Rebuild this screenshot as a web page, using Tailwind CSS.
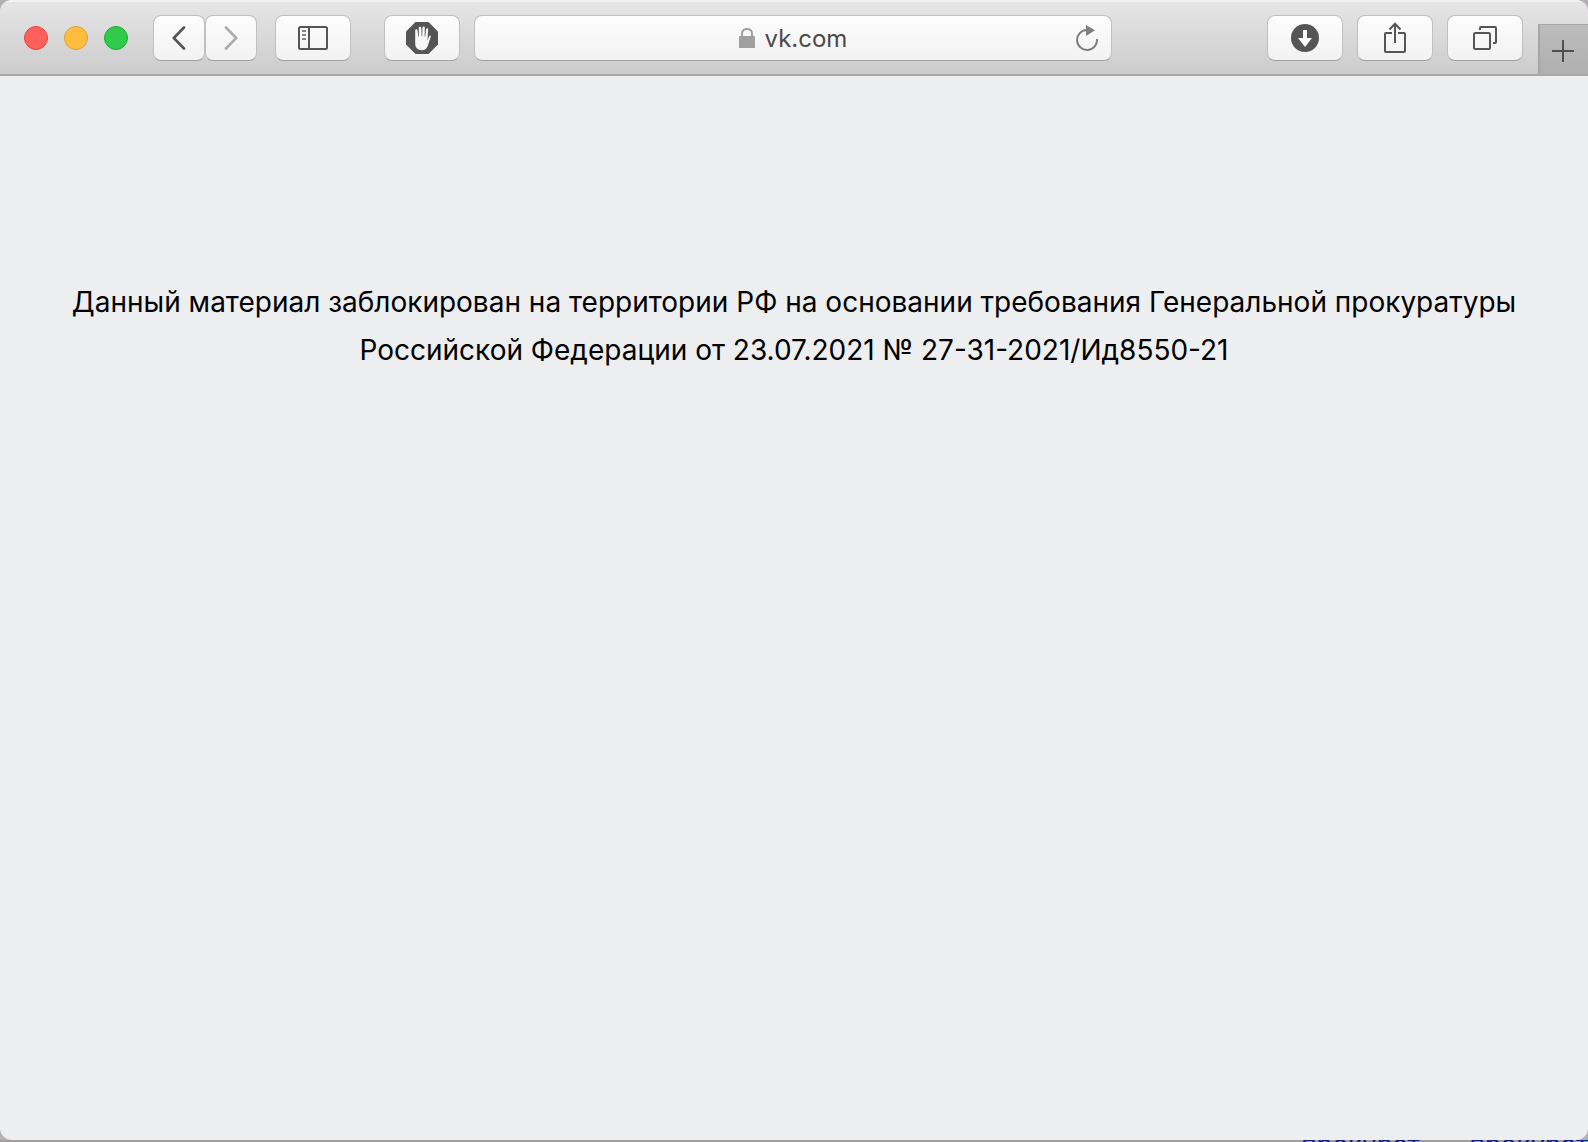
<!DOCTYPE html>
<html lang="ru">
<head>
  <meta charset="UTF-8">
  <meta name="viewport" content="width=device-width, initial-scale=1">
  <title>vk.com</title>
  <script src="https://cdn.jsdelivr.net/npm/@tailwindcss/browser@4"></script>
</head>
<body class="min-h-screen flex flex-col bg-[#b3b1b3] font-['Inter','Liberation_Sans',sans-serif] text-black">
  <!-- Browser window -->
  <div class="grow flex flex-col rounded-xl overflow-hidden bg-[#edeef0]">
    <!-- Toolbar -->
    <header class="flex items-center h-[76px] pl-6 bg-linear-to-b from-[#e6e6e6] to-[#cccccc] border-t-2 border-t-[#f2f2f2] border-b-2 border-b-[#a8a8a8]">
      <div class="flex gap-4 shrink-0">
        <button aria-label="Закрыть" class="size-6 rounded-full bg-[#ff6059] border border-[#e2463f]"></button>
        <button aria-label="Свернуть" class="size-6 rounded-full bg-[#ffbd3f] border border-[#e0a033]"></button>
        <button aria-label="Развернуть" class="size-6 rounded-full bg-[#30cb4b] border border-[#1dac2c]"></button>
      </div>

      <nav class="flex shrink-0 ml-[25px]">
        <button aria-label="Назад" class="flex items-center justify-center w-[52px] h-[46px] rounded-lg border border-[#c0c0c0] border-b-[#a2a2a2] bg-linear-to-b from-[#fdfdfd] to-[#f2f2f2]">
          <svg width="14" height="24" viewBox="0 0 14 24" fill="none" stroke="#555" stroke-width="2.6" stroke-linecap="round" stroke-linejoin="round"><path d="M12 1.5L1.8 12L12 22.5"/></svg>
        </button>
        <button aria-label="Вперёд" class="flex items-center justify-center w-[52px] h-[46px] rounded-lg border border-[#c0c0c0] border-b-[#a2a2a2] bg-linear-to-b from-[#fdfdfd] to-[#f2f2f2]">
          <svg width="14" height="24" viewBox="0 0 14 24" fill="none" stroke="#adadad" stroke-width="2.6" stroke-linecap="round" stroke-linejoin="round"><path d="M2 1.5L12.2 12L2 22.5"/></svg>
        </button>
      </nav>

      <button aria-label="Боковое меню" class="flex items-center justify-center shrink-0 w-[76px] h-[46px] ml-[18px] rounded-lg border border-[#c0c0c0] border-b-[#a2a2a2] bg-linear-to-b from-[#fdfdfd] to-[#f2f2f2]">
        <svg width="30" height="24" viewBox="0 0 30 24" fill="none" stroke="#555" stroke-width="2"><rect x="1" y="1" width="28" height="22" rx="1.5"/><path d="M11 1V23"/><path stroke="#858585" stroke-width="1.8" d="M4 5H8M4 9H8M4 13H8"/></svg>
      </button>

      <button aria-label="Блокировщик рекламы" class="flex items-center justify-center shrink-0 w-[76px] h-[46px] ml-[33px] rounded-lg border border-[#c0c0c0] border-b-[#a2a2a2] bg-linear-to-b from-[#fdfdfd] to-[#f2f2f2]">
        <svg width="32" height="32" viewBox="0 0 32 32"><path fill="#555" d="M9.5 0H22.5L32 9.5V22.5L22.5 32H9.5L0 22.5V9.5Z"/><path fill="#f8f8f8" d="M9.2 8.4C9.2 6.8 11.5 6.8 11.6 8.4L12.2 14.6H12.8V6C12.8 4.4 15.2 4.4 15.3 6L15.6 14.2H16.2L16.4 5.5C16.5 4 18.8 4 18.8 5.5L18.7 14.6H19.3L20 7.4C20.2 5.9 22.2 6.1 22.2 7.6L21.4 18.4L22.9 14.8C23.6 13.3 25.2 13.2 24.8 14.4L21.9 23.5C20.9 26.5 19 28.2 15.8 28.2C11.8 28.2 9.3 25.7 9.2 21.8Z"/></svg>
      </button>

      <!-- Address bar -->
      <form class="grid grid-cols-[1fr_auto_1fr] items-center grow h-[46px] ml-[14px] rounded-lg border border-[#c0c0c0] border-b-[#a2a2a2] bg-linear-to-b from-[#fdfdfd] to-[#f2f2f2]">
        <div class="col-start-2 flex items-center gap-[10px]">
          <svg width="16" height="20" viewBox="0 0 16 20"><rect y="8" width="16" height="12" rx=".5" fill="#a0a0a0"/><path d="M3 9V5.5C3 -.6 13 -.6 13 5.5V9" fill="none" stroke="#a0a0a0" stroke-width="2"/></svg>
          <input type="text" value="vk.com" aria-label="Адрес сайта" class="field-sizing-content pt-[2px] text-2xl text-[#4a4a4a] outline-none">
        </div>
        <button type="button" aria-label="Обновить" class="justify-self-end mr-3">
          <svg width="24" height="26" viewBox="0 0 24 26"><path d="M11.5 5A10 10 0 1 0 22 14" fill="none" stroke="#7e7e7e" stroke-width="2"/><path fill="#7e7e7e" d="M11 0L20 5.2L11 11Z"/></svg>
        </button>
      </form>

      <div class="flex gap-[14px] shrink-0 ml-[155px]">
        <button aria-label="Загрузки" class="flex items-center justify-center w-[76px] h-[46px] rounded-lg border border-[#c0c0c0] border-b-[#a2a2a2] bg-linear-to-b from-[#fdfdfd] to-[#f2f2f2]">
          <svg width="28" height="28" viewBox="0 0 28 28"><circle cx="14" cy="14" r="14" fill="#555"/><path fill="#fafafa" d="M12 6H16V14H21L14 23L7 14H12Z"/></svg>
        </button>
        <button aria-label="Поделиться" class="flex items-center justify-center w-[76px] h-[46px] rounded-lg border border-[#c0c0c0] border-b-[#a2a2a2] bg-linear-to-b from-[#fdfdfd] to-[#f2f2f2]">
          <svg width="22" height="32" viewBox="0 0 22 32" fill="none" stroke="#555" stroke-width="2"><path d="M8 11H2Q1 11 1 12V29Q1 30 2 30H20Q21 30 21 29V12Q21 11 20 11H14"/><path d="M11 21V2M5.5 7.5L11 1.8L16.5 7.5"/></svg>
        </button>
        <button aria-label="Все вкладки" class="flex items-center justify-center w-[76px] h-[46px] rounded-lg border border-[#c0c0c0] border-b-[#a2a2a2] bg-linear-to-b from-[#fdfdfd] to-[#f2f2f2]">
          <svg width="24" height="24" viewBox="0 0 24 24" fill="none" stroke="#555" stroke-width="2"><rect x="1" y="7" width="16" height="16" rx="1.5"/><path d="M7 4V2Q7 1 8 1H22Q23 1 23 2V16Q23 17 22 17H20"/></svg>
        </button>
      </div>

      <button aria-label="Новая вкладка" class="flex items-center justify-center self-end shrink-0 w-[50px] h-[50px] pt-[2px] pr-[2px] ml-[15px] bg-linear-to-b from-[#bcbcbc] to-[#afafaf] border-l-2 border-t border-[#a6a6a6]">
        <svg width="22" height="22" viewBox="0 0 22 22" stroke="#4f4f4f" stroke-width="2"><path d="M11 0V22M0 11H22"/></svg>
      </button>
    </header>

    <!-- Page content -->
    <main class="px-16 pt-[202px] text-center">
      <p class="text-[28px] leading-[48px]">Данный материал заблокирован на территории РФ на основании требования Генеральной прокуратуры<br>Российской Федерации от 23.07.2021 № 27-31-2021/Ид8550-21</p>
    </main>
  </div>

  <!-- Edge of the page behind the window -->
  <div class="flex justify-end gap-[50px] h-[2px] overflow-hidden bg-[#a09e9f] text-[26px] leading-[10px] text-[#0b1f80]" aria-hidden="true">
    <span>прокурат</span>
    <span>прокурат</span>
  </div>
</body>
</html>
